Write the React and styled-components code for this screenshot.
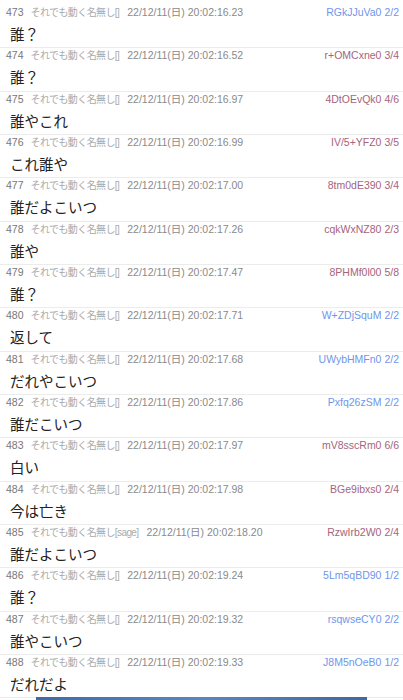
import React from 'react';
import styled, { createGlobalStyle } from 'styled-components';

const GlobalStyle = createGlobalStyle`
    html, body {
        margin: 0;
        padding: 0;
        background: #fff;
    }
    body {
        font-family: "Liberation Sans", "Noto Sans CJK JP", sans-serif;
        overflow: hidden;
    }
`;

const Thread = styled.div`
    width: 403px;
    padding-top: 5px;
    display: flex;
    flex-direction: column;
`;

const Post = styled.div`
    display: flex;
    flex-direction: column;
    border-bottom: 1px solid #ececec;
`;

const Header = styled.div`
    display: flex;
    align-items: center;
    height: 15px;
    line-height: 15px;
    padding: 0 4px 0 6px;
    font-size: 10.5px;
    white-space: nowrap;
`;

const Num = styled.span`
    color: #777;
    margin-right: 7px;
`;

const Name = styled.span`
    color: #aaa;
    font-size: 10px;
    letter-spacing: -0.6px;
    margin-right: 8px;
`;

const Date = styled.span`
    color: #8a8a8a;
`;

const Id = styled.span`
    margin-left: auto;
    color: ${p => (p.$hot ? '#a5647c' : '#7096ea')};
`;

const Body = styled.div`
    height: 27.33px;
    line-height: 27.33px;
    padding-left: 10px;
    font-size: 14.5px;
    color: #222;
    font-family: "Noto Sans CJK JP", sans-serif;
`;

const HomeBar = styled.div`
    position: fixed;
    left: 36px;
    width: 331px;
    bottom: 0;
    height: 3px;
    background: linear-gradient(90deg, #3f6aa6, #5b86bd 50%, #41689f);
`;

const posts = [
    { no: 473, time: '20:02:16.23', id: 'RGkJJuVa0', n: '2/2', text: '誰？' },
    { no: 474, time: '20:02:16.52', id: 'r+OMCxne0', n: '3/4', text: '誰？' },
    { no: 475, time: '20:02:16.97', id: '4DtOEvQk0', n: '4/6', text: '誰やこれ' },
    { no: 476, time: '20:02:16.99', id: 'IV/5+YFZ0', n: '3/5', text: 'これ誰や' },
    { no: 477, time: '20:02:17.00', id: '8tm0dE390', n: '3/4', text: '誰だよこいつ' },
    { no: 478, time: '20:02:17.26', id: 'cqkWxNZ80', n: '2/3', text: '誰や' },
    { no: 479, time: '20:02:17.47', id: '8PHMf0l00', n: '5/8', text: '誰？' },
    { no: 480, time: '20:02:17.71', id: 'W+ZDjSquM', n: '2/2', text: '返して' },
    { no: 481, time: '20:02:17.68', id: 'UWybHMFn0', n: '2/2', text: 'だれやこいつ' },
    { no: 482, time: '20:02:17.86', id: 'Pxfq26zSM', n: '2/2', text: '誰だこいつ' },
    { no: 483, time: '20:02:17.97', id: 'mV8sscRm0', n: '6/6', text: '白い' },
    { no: 484, time: '20:02:17.98', id: 'BGe9ibxs0', n: '2/4', text: '今は亡き' },
    { no: 485, time: '20:02:18.20', id: 'RzwIrb2W0', n: '2/4', text: '誰だよこいつ', mail: 'sage' },
    { no: 486, time: '20:02:19.24', id: '5Lm5qBD90', n: '1/2', text: '誰？' },
    { no: 487, time: '20:02:19.32', id: 'rsqwseCY0', n: '2/2', text: '誰やこいつ' },
    { no: 488, time: '20:02:19.33', id: 'J8M5nOeB0', n: '1/2', text: 'だれだよ' },
];

export default function App() {
    return (
        <>
            <GlobalStyle />
            <Thread>
                {posts.map(p => {
                    const total = Number(p.n.split('/')[1]);
                    return (
                        <Post key={p.no}>
                            <Header>
                                <Num>{p.no}</Num>
                                <Name>それでも動く名無し[{p.mail || ''}]</Name>
                                <Date>22/12/11(日) {p.time}</Date>
                                <Id $hot={total > 2}>{p.id} {p.n}</Id>
                            </Header>
                            <Body>{p.text}</Body>
                        </Post>
                    );
                })}
            </Thread>
            <HomeBar />
        </>
    );
}
